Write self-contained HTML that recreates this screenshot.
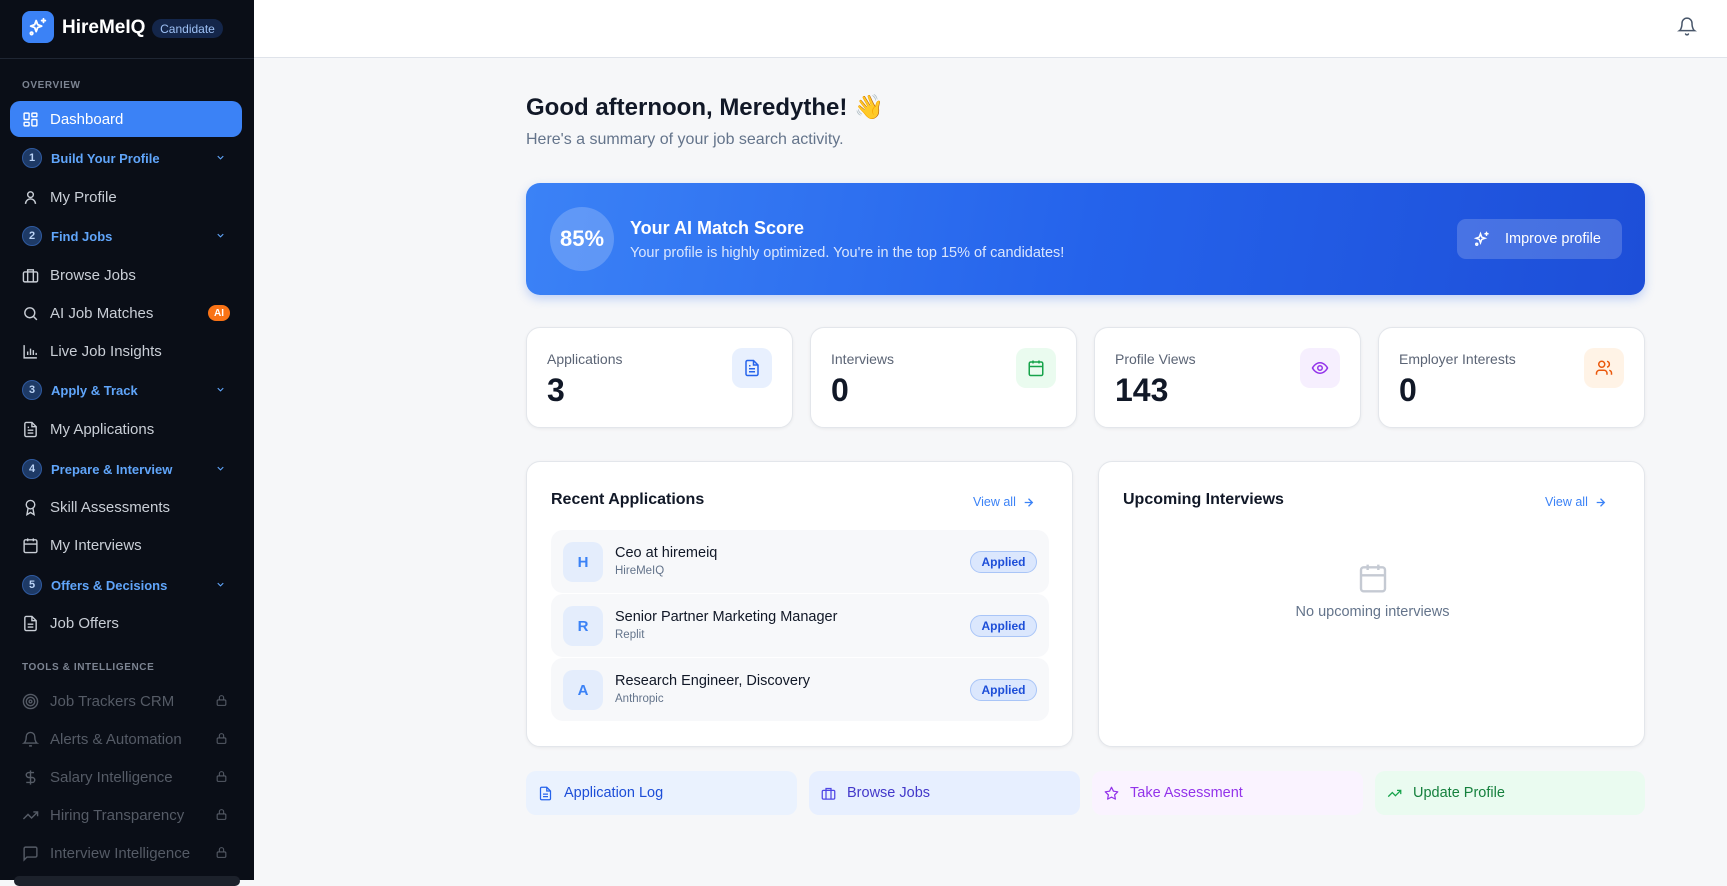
<!DOCTYPE html>
<html><head><meta charset="utf-8"><style>
*{box-sizing:border-box;margin:0;padding:0}
html,body{background:#f6f7f9}
body{width:1727px;height:880px;overflow:hidden;font-family:"Liberation Sans",sans-serif;position:relative;color:#0f172a}
.a{position:absolute}
#sb{left:0;top:0;width:254px;height:880px;background:#0a0e17}
.it{position:absolute;left:10px;width:232px;height:36px;display:flex;align-items:center;padding-left:12px;font-size:15px;color:#c9ced6}
.it svg{width:17px;height:17px;margin-right:11px;flex:none}
.st{color:#60a5fa;font-weight:bold;font-size:13px}
.st .n{width:20px;height:20px;border-radius:50%;background:#1e3a66;border:1px solid #2f5aa0;color:#bcd4f6;font-size:11px;display:flex;align-items:center;justify-content:center;margin-right:9px}
.it svg.ch{position:absolute;right:16px;top:12px;width:11px;height:11px;margin:0}
.lk{color:#555b66}
.it svg.lock{position:absolute;right:14px;top:11px;width:13px;height:13px;margin:0}
.lbl{position:absolute;left:22px;font-size:10px;letter-spacing:.6px;color:#7c8492;font-weight:bold}
.card{background:#fff;border:1px solid #e3e6eb;border-radius:14px;box-shadow:0 1px 3px rgba(0,0,0,.06)}
.sc .l{position:absolute;left:20px;top:23px;font-size:14px;color:#5b6475}
.sc .v{position:absolute;left:20px;top:44px;font-size:32px;font-weight:bold;color:#111827}
.sc .ic{position:absolute;right:20px;top:20px;width:40px;height:40px;border-radius:10px;display:flex;align-items:center;justify-content:center}
.row{position:absolute;left:24px;width:498px;height:63px;background:#f7f8fa;border-radius:12px}
.av{position:absolute;left:12px;top:12px;width:40px;height:40px;border-radius:10px;background:#e4edfc;color:#3b82f6;font-weight:bold;font-size:15px;display:flex;align-items:center;justify-content:center}
.rt{position:absolute;left:64px;top:15px;font-size:14.5px;color:#111827}
.rs{position:absolute;left:64px;top:35px;font-size:11.5px;color:#64748b}
.bd{position:absolute;right:12px;top:21px;width:67px;height:22px;border-radius:11px;background:#dbe7fd;border:1px solid #a9c5f7;color:#1d4ed8;font-size:12px;font-weight:bold;display:flex;align-items:center;justify-content:center}
.ql{position:absolute;top:771px;height:44px;width:271px;border-radius:10px;display:flex;align-items:center;padding-left:12px;font-size:14.5px}
.ql svg{width:15px;height:15px;margin-right:11px}
.va{position:absolute;font-size:12.5px;color:#3b82f6;display:flex;align-items:center;gap:6px}
</style></head><body>
<div class="a" style="left:254px;top:0;width:1473px;height:880px;background:#f6f7f9"></div>
<div id="sb" class="a">
 <div class="a" style="left:22px;top:11px;width:32px;height:32px;border-radius:8px;background:#3b82f6;display:flex;align-items:center;justify-content:center">
  <svg width="22" height="22" viewBox="0 0 24 24" fill="none" stroke="#fff" stroke-width="2" stroke-linecap="round" stroke-linejoin="round"><path d="M10 5l1.6 4.4L16 11l-4.4 1.6L10 17l-1.6-4.4L4 11l4.4-1.6z"/><path d="M18 3v4M16 5h4"/><circle cx="5" cy="19" r="1.3"/></svg></div>
 <div class="a" style="left:62px;top:17px;font-size:19px;font-weight:bold;color:#fff">HireMeIQ</div>
 <div class="a" style="left:152px;top:19px;width:71px;height:19px;border-radius:10px;background:#14264a;color:#9ec1f5;font-size:12px;display:flex;align-items:center;justify-content:center">Candidate</div>
 <div class="a" style="left:0;top:58px;width:254px;height:1px;background:#1f2633"></div>
 <div class="lbl" style="top:80px">OVERVIEW</div>
 <div class="it" style="top:101px;background:#3b82f6;border-radius:10px;color:#fff"><svg viewBox="0 0 24 24" fill="none" stroke="#fff" stroke-width="2"><rect x="3" y="3" width="7" height="9" rx="1"/><rect x="14" y="3" width="7" height="5" rx="1"/><rect x="14" y="12" width="7" height="9" rx="1"/><rect x="3" y="16" width="7" height="5" rx="1"/></svg>Dashboard</div>
 <div class="it st" style="top:140px"><span class="n">1</span>Build Your Profile<svg class="ch" viewBox="0 0 24 24" fill="none" stroke="#60a5fa" stroke-width="2.5"><path d="M6 9l6 6 6-6"/></svg></div>
 <div class="it" style="top:179px"><svg viewBox="0 0 24 24" fill="none" stroke="#c9ced6" stroke-width="2"><circle cx="12" cy="8" r="4"/><path d="M5 21a7 7 0 0 1 14 0"/></svg>My Profile</div>
 <div class="it st" style="top:218px"><span class="n">2</span>Find Jobs<svg class="ch" viewBox="0 0 24 24" fill="none" stroke="#60a5fa" stroke-width="2.5"><path d="M6 9l6 6 6-6"/></svg></div>
 <div class="it" style="top:257px"><svg viewBox="0 0 24 24" fill="none" stroke="#c9ced6" stroke-width="2"><rect x="2" y="7" width="20" height="14" rx="2"/><path d="M8 7V4h8v3M8 7v14M16 7v14"/></svg>Browse Jobs</div>
 <div class="it" style="top:295px"><svg viewBox="0 0 24 24" fill="none" stroke="#c9ced6" stroke-width="2"><circle cx="11" cy="11" r="7"/><path d="M21 21l-4.5-4.5"/></svg>AI Job Matches<span class="a" style="right:12px;top:10px;width:22px;height:16px;border-radius:8px;background:#f97316;color:#fff;font-size:10px;font-weight:bold;display:flex;align-items:center;justify-content:center">AI</span></div>
 <div class="it" style="top:333px"><svg viewBox="0 0 24 24" fill="none" stroke="#c9ced6" stroke-width="2"><path d="M3 3v18h18M8 17v-5M12 17V8M16 17v-7M20 17v-3"/></svg>Live Job Insights</div>
 <div class="it st" style="top:372px"><span class="n">3</span>Apply &amp; Track<svg class="ch" viewBox="0 0 24 24" fill="none" stroke="#60a5fa" stroke-width="2.5"><path d="M6 9l6 6 6-6"/></svg></div>
 <div class="it" style="top:411px"><svg viewBox="0 0 24 24" fill="none" stroke="#c9ced6" stroke-width="2"><path d="M14 2H6a2 2 0 0 0-2 2v16a2 2 0 0 0 2 2h12a2 2 0 0 0 2-2V8z"/><path d="M14 2v6h6M8 13h8M8 17h8M8 9h2"/></svg>My Applications</div>
 <div class="it st" style="top:451px"><span class="n">4</span>Prepare &amp; Interview<svg class="ch" viewBox="0 0 24 24" fill="none" stroke="#60a5fa" stroke-width="2.5"><path d="M6 9l6 6 6-6"/></svg></div>
 <div class="it" style="top:489px"><svg viewBox="0 0 24 24" fill="none" stroke="#c9ced6" stroke-width="2"><circle cx="12" cy="8" r="6"/><path d="M8.5 13.5L7 22l5-3 5 3-1.5-8.5"/></svg>Skill Assessments</div>
 <div class="it" style="top:527px"><svg viewBox="0 0 24 24" fill="none" stroke="#c9ced6" stroke-width="2"><rect x="3" y="4" width="18" height="18" rx="2"/><path d="M16 2v4M8 2v4M3 10h18"/></svg>My Interviews</div>
 <div class="it st" style="top:567px"><span class="n">5</span>Offers &amp; Decisions<svg class="ch" viewBox="0 0 24 24" fill="none" stroke="#60a5fa" stroke-width="2.5"><path d="M6 9l6 6 6-6"/></svg></div>
 <div class="it" style="top:605px"><svg viewBox="0 0 24 24" fill="none" stroke="#c9ced6" stroke-width="2"><path d="M14 2H6a2 2 0 0 0-2 2v16a2 2 0 0 0 2 2h12a2 2 0 0 0 2-2V8z"/><path d="M14 2v6h6M8 13h8M8 17h8"/></svg>Job Offers</div>
 <div class="lbl" style="top:662px">TOOLS &amp; INTELLIGENCE</div>
 <div class="it lk" style="top:683px"><svg viewBox="0 0 24 24" fill="none" stroke="#555b66" stroke-width="2"><circle cx="12" cy="12" r="10"/><circle cx="12" cy="12" r="6"/><circle cx="12" cy="12" r="2"/></svg>Job Trackers CRM<svg class="lock" viewBox="0 0 24 24" fill="none" stroke="#555b66" stroke-width="2"><rect x="4" y="11" width="16" height="10" rx="2"/><path d="M8 11V7a4 4 0 0 1 8 0v4"/></svg></div>
 <div class="it lk" style="top:721px"><svg viewBox="0 0 24 24" fill="none" stroke="#555b66" stroke-width="2"><path d="M6 8a6 6 0 0 1 12 0c0 7 3 9 3 9H3s3-2 3-9M10 21h4"/></svg>Alerts &amp; Automation<svg class="lock" viewBox="0 0 24 24" fill="none" stroke="#555b66" stroke-width="2"><rect x="4" y="11" width="16" height="10" rx="2"/><path d="M8 11V7a4 4 0 0 1 8 0v4"/></svg></div>
 <div class="it lk" style="top:759px"><svg viewBox="0 0 24 24" fill="none" stroke="#555b66" stroke-width="2"><path d="M12 2v20M17 5H9.5a3.5 3.5 0 0 0 0 7h5a3.5 3.5 0 0 1 0 7H6"/></svg>Salary Intelligence<svg class="lock" viewBox="0 0 24 24" fill="none" stroke="#555b66" stroke-width="2"><rect x="4" y="11" width="16" height="10" rx="2"/><path d="M8 11V7a4 4 0 0 1 8 0v4"/></svg></div>
 <div class="it lk" style="top:797px"><svg viewBox="0 0 24 24" fill="none" stroke="#555b66" stroke-width="2"><path d="M22 7l-8.5 8.5-5-5L2 17M16 7h6v6"/></svg>Hiring Transparency<svg class="lock" viewBox="0 0 24 24" fill="none" stroke="#555b66" stroke-width="2"><rect x="4" y="11" width="16" height="10" rx="2"/><path d="M8 11V7a4 4 0 0 1 8 0v4"/></svg></div>
 <div class="it lk" style="top:835px"><svg viewBox="0 0 24 24" fill="none" stroke="#555b66" stroke-width="2"><path d="M21 15a2 2 0 0 1-2 2H7l-4 4V5a2 2 0 0 1 2-2h14a2 2 0 0 1 2 2z"/></svg>Interview Intelligence<svg class="lock" viewBox="0 0 24 24" fill="none" stroke="#555b66" stroke-width="2"><rect x="4" y="11" width="16" height="10" rx="2"/><path d="M8 11V7a4 4 0 0 1 8 0v4"/></svg></div>
 <div class="a" style="left:14px;top:876px;width:226px;height:10px;border-radius:8px;background:#1c212b"></div>
</div>

<div class="a" style="left:254px;top:0;width:1473px;height:58px;background:#fff;border-bottom:1px solid #dfe3ea"></div>
<svg class="a" style="left:1677px;top:16px" width="20" height="21" viewBox="0 0 24 24" fill="none" stroke="#475569" stroke-width="1.8" stroke-linecap="round"><path d="M6 8a6 6 0 0 1 12 0c0 7 3 9 3 9H3s3-2 3-9M10.3 21a1.9 1.9 0 0 0 3.4 0"/></svg>

<div class="a" style="left:526px;top:93px;font-size:24px;font-weight:bold;color:#111827">Good afternoon, Meredythe! <span style="font-family:'Noto Color Emoji','DejaVu Sans',sans-serif">👋</span></div>
<div class="a" style="left:526px;top:131px;font-size:16px;color:#64748b">Here's a summary of your job search activity.</div>

<div class="a" style="left:526px;top:183px;width:1119px;height:112px;border-radius:14px;background:linear-gradient(100deg,#3b82f6,#2563eb 50%,#1d4ed8);box-shadow:0 4px 10px rgba(37,99,235,.25)">
 <div class="a" style="left:24px;top:24px;width:64px;height:64px;border-radius:50%;background:rgba(255,255,255,.2);color:#fff;font-size:22px;font-weight:bold;display:flex;align-items:center;justify-content:center">85%</div>
 <div class="a" style="left:104px;top:35px;font-size:18px;font-weight:bold;color:#fff">Your AI Match Score</div>
 <div class="a" style="left:104px;top:62px;font-size:14.5px;color:#dbe6fd">Your profile is highly optimized. You're in the top 15% of candidates!</div>
 <div class="a" style="left:931px;top:36px;width:165px;height:40px;border-radius:9px;background:rgba(255,255,255,.18);color:#fff;font-size:14.5px;display:flex;align-items:center;padding-left:16px"><svg width="18" height="18" viewBox="0 0 24 24" fill="none" stroke="#fff" stroke-width="2" stroke-linecap="round" style="margin-right:14px"><path d="M10 5l1.6 4.4L16 11l-4.4 1.6L10 17l-1.6-4.4L4 11l4.4-1.6z"/><path d="M18 3v4M16 5h4"/><circle cx="5" cy="19" r="1.3"/></svg>Improve profile</div>
</div>

<div class="a card sc" style="left:526px;top:327px;width:267px;height:101px"><div class="l">Applications</div><div class="v">3</div><div class="ic" style="background:#e8f0fe"><svg width="18" height="18" viewBox="0 0 24 24" fill="none" stroke="#2563eb" stroke-width="2"><path d="M14 2H6a2 2 0 0 0-2 2v16a2 2 0 0 0 2 2h12a2 2 0 0 0 2-2V8z"/><path d="M14 2v6h6M8 13h8M8 17h8M8 9h2"/></svg></div></div>
<div class="a card sc" style="left:810px;top:327px;width:267px;height:101px"><div class="l">Interviews</div><div class="v">0</div><div class="ic" style="background:#eafbef"><svg width="18" height="18" viewBox="0 0 24 24" fill="none" stroke="#16a34a" stroke-width="2"><rect x="3" y="4" width="18" height="18" rx="2"/><path d="M16 2v4M8 2v4M3 10h18"/></svg></div></div>
<div class="a card sc" style="left:1094px;top:327px;width:267px;height:101px"><div class="l">Profile Views</div><div class="v">143</div><div class="ic" style="background:#f6effe"><svg width="18" height="18" viewBox="0 0 24 24" fill="none" stroke="#9333ea" stroke-width="2"><path d="M2 12s3.5-7 10-7 10 7 10 7-3.5 7-10 7S2 12 2 12z"/><circle cx="12" cy="12" r="3"/></svg></div></div>
<div class="a card sc" style="left:1378px;top:327px;width:267px;height:101px"><div class="l">Employer Interests</div><div class="v">0</div><div class="ic" style="background:#fff3e6"><svg width="18" height="18" viewBox="0 0 24 24" fill="none" stroke="#ea580c" stroke-width="2"><circle cx="9" cy="7" r="4"/><path d="M2 21v-2a4 4 0 0 1 4-4h6a4 4 0 0 1 4 4v2M16 3.1a4 4 0 0 1 0 7.8M22 21v-2a4 4 0 0 0-3-3.9"/></svg></div></div>

<div class="a card" style="left:526px;top:461px;width:547px;height:286px">
 <div class="a" style="left:24px;top:29px;font-size:16px;font-weight:bold;color:#111827">Recent Applications</div>
 <div class="va" style="left:446px;top:33px">View all <svg width="13" height="13" viewBox="0 0 24 24" fill="none" stroke="#3b82f6" stroke-width="2.5"><path d="M5 12h14M12 5l7 7-7 7"/></svg></div>
 <div class="row" style="top:68px"><div class="av">H</div><div class="rt">Ceo at hiremeiq</div><div class="rs">HireMeIQ</div><div class="bd">Applied</div></div>
 <div class="row" style="top:132px"><div class="av">R</div><div class="rt">Senior Partner Marketing Manager</div><div class="rs">Replit</div><div class="bd">Applied</div></div>
 <div class="row" style="top:196px"><div class="av">A</div><div class="rt">Research Engineer, Discovery</div><div class="rs">Anthropic</div><div class="bd">Applied</div></div>
</div>
<div class="a card" style="left:1098px;top:461px;width:547px;height:286px">
 <div class="a" style="left:24px;top:29px;font-size:16px;font-weight:bold;color:#111827">Upcoming Interviews</div>
 <div class="va" style="left:446px;top:33px">View all <svg width="13" height="13" viewBox="0 0 24 24" fill="none" stroke="#3b82f6" stroke-width="2.5"><path d="M5 12h14M12 5l7 7-7 7"/></svg></div>
 <svg class="a" style="left:258px;top:100px" width="32" height="32" viewBox="0 0 24 24" fill="none" stroke="#c5cad3" stroke-width="1.8"><rect x="3" y="4" width="18" height="18" rx="2"/><path d="M16 2v4M8 2v4M3 10h18"/></svg>
 <div class="a" style="left:0;width:547px;top:142px;text-align:center;font-size:14.5px;color:#64748b">No upcoming interviews</div>
</div>

<div class="ql" style="left:526px;background:#eaf2fe;color:#1d4ed8"><svg viewBox="0 0 24 24" fill="none" stroke="#2563eb" stroke-width="2"><path d="M14 2H6a2 2 0 0 0-2 2v16a2 2 0 0 0 2 2h12a2 2 0 0 0 2-2V8z"/><path d="M14 2v6h6M8 13h8M8 17h8"/></svg>Application Log</div>
<div class="ql" style="left:809px;background:#e7efff;color:#4338ca"><svg viewBox="0 0 24 24" fill="none" stroke="#4f46e5" stroke-width="2"><rect x="2" y="7" width="20" height="14" rx="2"/><path d="M8 7V4h8v3M8 7v14M16 7v14"/></svg>Browse Jobs</div>
<div class="ql" style="left:1092px;background:#faf3ff;color:#9333ea"><svg viewBox="0 0 24 24" fill="none" stroke="#9333ea" stroke-width="2" stroke-linejoin="round"><path d="M12 2l3.1 6.3 6.9 1-5 4.9 1.2 6.8L12 17.8 5.8 21l1.2-6.8-5-4.9 6.9-1z"/></svg>Take Assessment</div>
<div class="ql" style="left:1375px;width:270px;background:#eafbf0;color:#15803d"><svg viewBox="0 0 24 24" fill="none" stroke="#16a34a" stroke-width="2"><path d="M22 7l-8.5 8.5-5-5L2 17M16 7h6v6"/></svg>Update Profile</div>
</body></html>
